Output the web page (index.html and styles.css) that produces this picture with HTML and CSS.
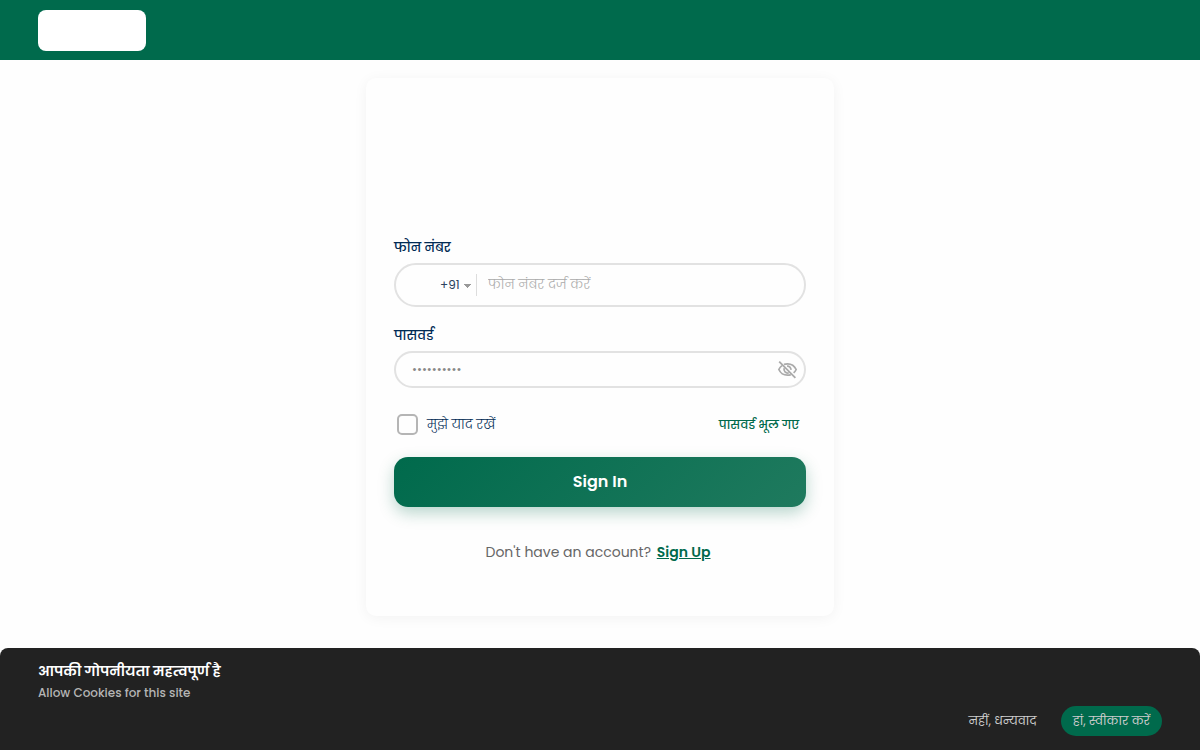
FILE: index.html
```html
<!DOCTYPE html>
<html lang="hi">
<head>
    <meta charset="UTF-8">
    <meta name="viewport" content="width=device-width, initial-scale=1">
    <title>Sign In</title>
    <link rel="stylesheet" href="styles.css">
</head>
<body>
    <header class="topbar">
        <a href="#" class="logo" aria-label="Home"></a>
    </header>

    <main class="container">
        <form class="card">
            <label class="field-label" for="phone">फोन नंबर</label>
            <div class="field field-phone">
                <select class="country" aria-label="Country code">
                    <option>+91</option>
                </select>
                <input type="tel" id="phone" placeholder="फोन नंबर दर्ज करें">
            </div>

            <label class="field-label" for="password">पासवर्ड</label>
            <div class="field field-password">
                <input type="password" id="password" placeholder="••••••••••">
                <button type="button" class="toggle" aria-label="Show password">
                    <svg viewBox="0 0 24 24" width="21" height="21" fill="none" stroke="currentColor" stroke-width="2">
                        <path d="M8 6.100C9.200 5.700 10.600 5.500 12 5.500C16.400 5.500 20.100 8.100 21.900 12C21.200 13.500 20.200 14.800 19 15.900M15.800 17.800C14.600 18.300 13.300 18.500 12 18.500C7.600 18.500 3.900 15.900 2.100 12C2.900 10.200 4.200 8.700 5.700 7.600"/>
                        <path d="M11.500 8.100A4 4 0 0 1 15.900 12.500M13.500 15.700A4 4 0 0 1 8.300 10.500"/>
                        <path d="M2.500 3L21 21.500"/>
                    </svg>
                </button>
            </div>

            <div class="options">
                <label class="remember"><input type="checkbox">मुझे याद रखें</label>
                <a href="#" class="forgot">पासवर्ड भूल गए</a>
            </div>

            <button type="submit" class="submit">Sign In</button>

            <p class="signup">Don't have an account? <a href="#">Sign Up</a></p>
        </form>
    </main>

    <section class="cookies" aria-label="Cookies">
        <h2>आपकी गोपनीयता महत्वपूर्ण है</h2>
        <p>Allow Cookies for this site</p>
        <div class="cookie-actions">
            <button type="button" class="decline">नहीं, धन्यवाद</button>
            <button type="button" class="accept">हां, स्वीकार करें</button>
        </div>
    </section>
</body>
</html>
```
FILE: styles.css
```css
* {
    box-sizing: border-box;
}

body {
    margin: 0;
    min-height: 100vh;
    background: #fefefe;
    font-family: Poppins, Inter, 'Noto Sans', sans-serif;
    font-size: 13px;
    line-height: 20px;
    color: #012b55;
}

button, input, select {
    font: inherit;
    color: inherit;
}

button {
    cursor: pointer;
    border: none;
    background: none;
    padding: 0;
}

.topbar {
    display: flex;
    align-items: center;
    height: 60px;
    padding: 0 38px;
    background: #006a4c;
}

.logo {
    width: 108px;
    height: 41px;
    border-radius: 8px;
    background: white;
}

.container {
    padding: 18px 16px 0;
}

.card {
    max-width: 468px;
    margin: 0 auto;
    padding: 160px 28px 54px;
    border-radius: 10px;
    background: #fefefe;
    box-shadow: 0 2px 14px rgba(0, 0, 0, 0.05);
}

.field-label {
    display: block;
    margin-bottom: 5px;
    font-weight: 500;
}

.field {
    display: flex;
    align-items: center;
    margin-bottom: 19px;
    border: 2px solid #e2e2e2;
    border-radius: 22px;
}

.field input {
    flex: 1;
    min-width: 0;
    padding: 0;
    border: none;
    outline: none;
    background: none;
}

.field ::placeholder {
    color: #aaa;
    font-weight: 300;
    opacity: 1;
}

.field-phone {
    height: 44px;
    padding-left: 44px;
}

.country {
    appearance: none;
    width: 37px;
    height: 22px;
    margin-right: 11px;
    padding: 0;
    border: none;
    border-right: 1px solid #ddd;
    border-radius: 0;
    background: conic-gradient(from -45deg at 50% 100%, #999 90deg, transparent 0) 23px 10px / 8px 4px no-repeat;
    color: #2c4460;
    font-size: 12px;
}

.field-password {
    height: 37px;
    margin-bottom: 26px;
    padding: 0 6px 0 16px;
}

.field-password input {
    font-size: 12px;
}

.field-password ::placeholder {
    color: #888;
    font-weight: 400;
}

.toggle {
    display: flex;
    color: #aaa;
}

.options {
    display: flex;
    justify-content: space-between;
    align-items: center;
    margin-bottom: 22px;
    padding: 0 7px 0 3px;
}

.remember {
    display: flex;
    align-items: center;
    gap: 9px;
    font-weight: 300;
}

.remember input {
    appearance: none;
    width: 21px;
    height: 21px;
    margin: 0;
    border: 2px solid #b5b5b5;
    border-radius: 5px;
}

.remember input:checked {
    background: #006a4c;
}

.forgot {
    color: #006a4c;
    font-size: 12px;
    font-weight: 500;
    text-decoration: none;
}

.submit {
    width: 100%;
    height: 50px;
    border-radius: 14px;
    background: linear-gradient(135deg, #006a4c, #1f7a5e);
    box-shadow: 0 6px 16px rgba(0, 106, 76, 0.28);
    color: white;
    font-size: 16px;
    font-weight: 600;
}

.signup {
    margin: 35px 0 0;
    padding-right: 4px;
    color: #666;
    font-size: 14px;
    text-align: center;
}

.signup a {
    margin-left: 2px;
    color: #006a4c;
    font-weight: 600;
}

.cookies {
    position: fixed;
    left: 0;
    right: 0;
    bottom: 0;
    padding: 13px 38px 14px;
    border-radius: 8px 8px 0 0;
    background: #222;
    color: #ccc;
}

.cookies h2 {
    margin: 0 0 2px;
    color: white;
    font-size: 14px;
    font-weight: 600;
}

.cookies p {
    margin: 0 0 3px;
    font-size: 12px;
    font-weight: 500;
    color: #b5b5b5;
}

.cookie-actions {
    display: flex;
    justify-content: flex-end;
    gap: 24px;
    font-size: 12px;
}

.accept {
    height: 30px;
    padding: 0 12px;
    border-radius: 15px;
    background: #006a4c;
}
```
